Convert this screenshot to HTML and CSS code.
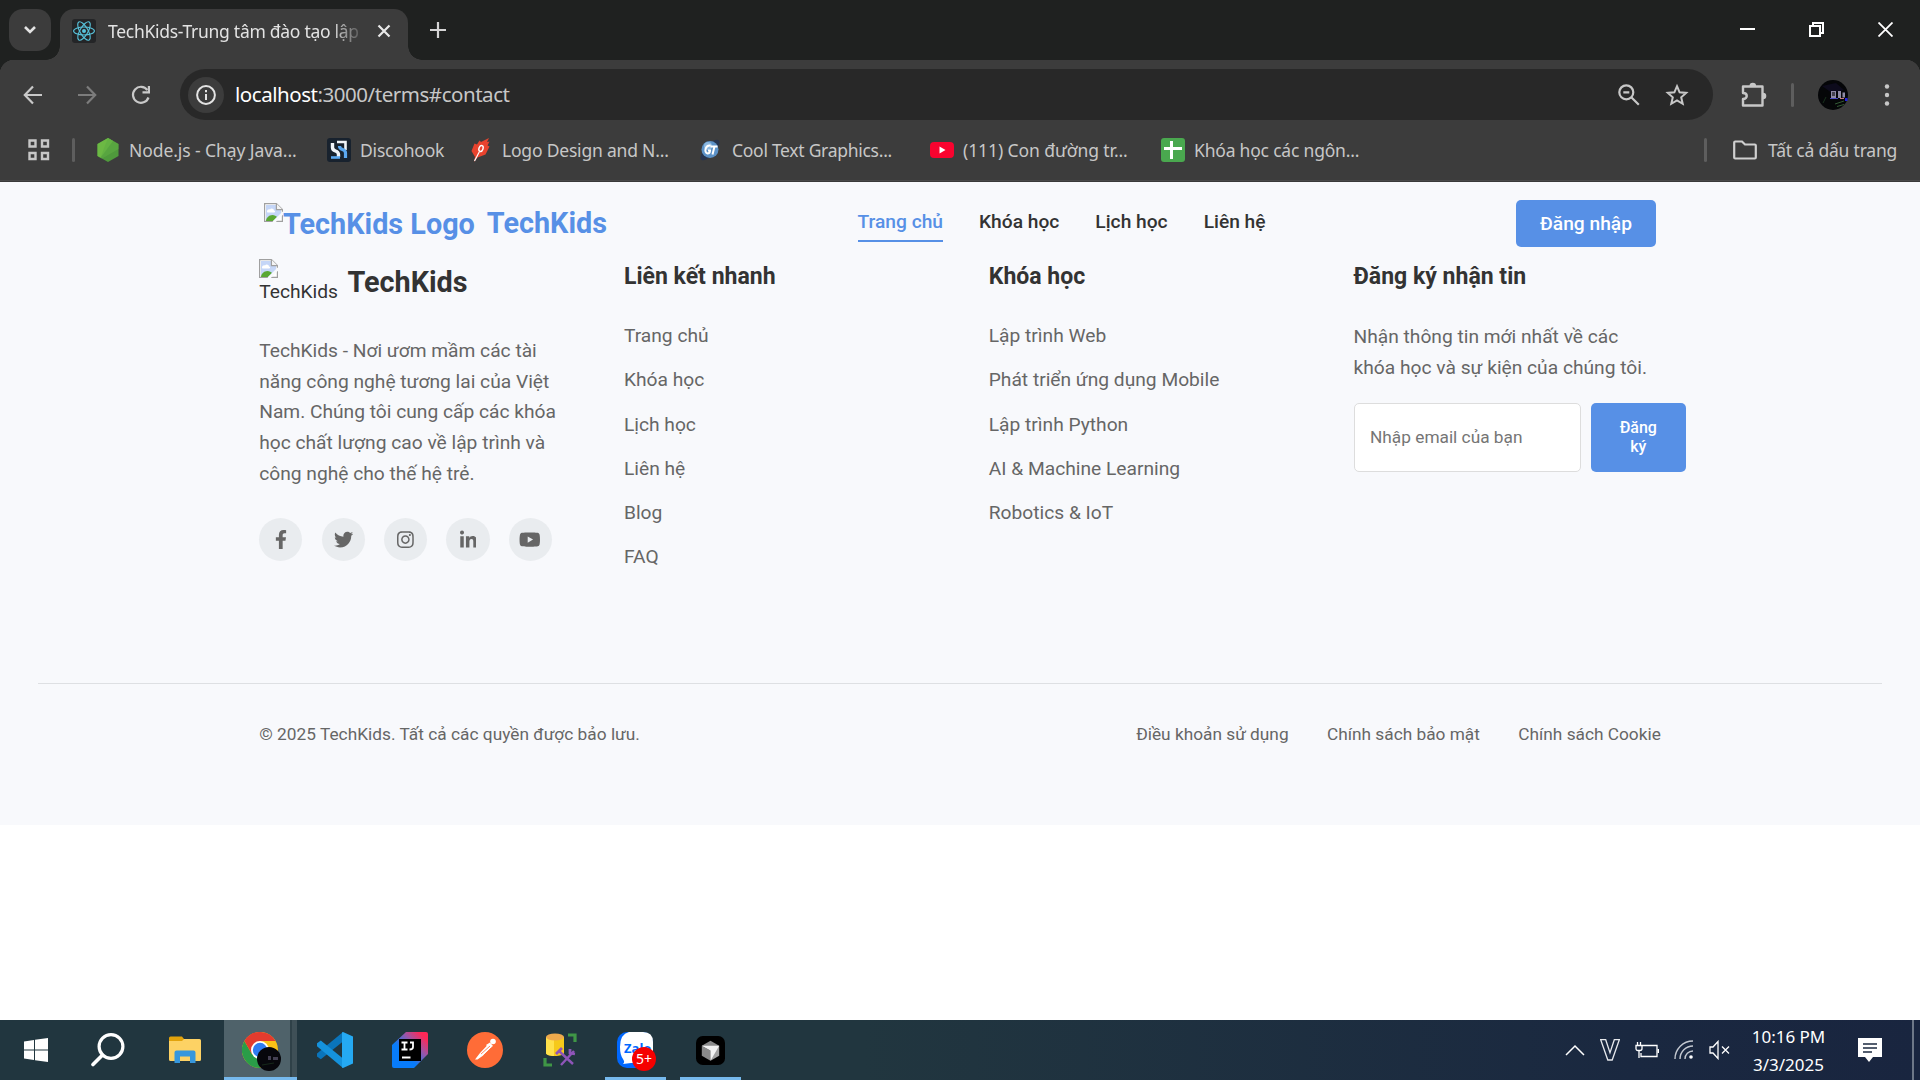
FILE: index.html
```html
<!DOCTYPE html>
<html lang="vi">
<head>
<meta charset="utf-8">
<title>TechKids-Trung tâm đào tạo lập trình</title>
<link rel="stylesheet" href="styles.css">
</head>
<body>
<div class="tabstrip">
  <div class="tab-search"><svg width="14" height="10" viewBox="0 0 14 10"><path d="M2 2l5 5 5-5" fill="none" stroke="#e3e3e3" stroke-width="2.6"/></svg></div>
  <div class="tab">
    <svg class="favicon" width="24" height="24" viewBox="0 0 24 24"><rect width="24" height="24" rx="3" fill="#242527"/><g fill="none" stroke="#58c4dc" stroke-width="1.1"><ellipse cx="12" cy="12" rx="10.4" ry="4"/><ellipse cx="12" cy="12" rx="10.4" ry="4" transform="rotate(60 12 12)"/><ellipse cx="12" cy="12" rx="10.4" ry="4" transform="rotate(120 12 12)"/></g><circle cx="12" cy="12" r="2" fill="#58c4dc"/></svg>
    <div class="tab-title"><span class="t">TechKids-Trung tâm đào tạo lập</span></div>
    <svg class="tab-close" width="14" height="14" viewBox="0 0 14 14"><path d="M1.5 1.5l11 11M12.5 1.5l-11 11" stroke="#e8e8e8" stroke-width="2.2"/></svg>
  </div>
  <svg class="new-tab" width="16" height="16" viewBox="0 0 16 16"><path d="M8 0v16M0 8h16" stroke="#d5d5d5" stroke-width="2.2"/></svg>
  <div class="win-controls">
    <svg width="15" height="15" viewBox="0 0 15 15"><path d="M0 7h15" stroke="#fff" stroke-width="2"/></svg>
    <svg width="15" height="15" viewBox="0 0 15 15"><path d="M1 4h10v10H1zM4 4V1h10v10h-3" fill="none" stroke="#fff" stroke-width="2"/></svg>
    <svg width="15" height="15" viewBox="0 0 15 15"><path d="M.5.5l14 14M14.5.5l-14 14" stroke="#fff" stroke-width="1.8"/></svg>
  </div>
</div>
<div class="toolbar-wrap">
<div class="toolbar">
  <svg class="nav-btn" width="20" height="20" viewBox="0 0 20 20"><path d="M19 10H2M10 1.5L1.8 10l8.2 8.500" fill="none" stroke="#c9c9c9" stroke-width="2.2"/></svg>
  <svg class="nav-btn" width="20" height="20" viewBox="0 0 20 20"><path d="M1 10h17M10 1.5l8.200 8.500L10 18.500" fill="none" stroke="#7c7c7c" stroke-width="2.2"/></svg>
  <svg class="nav-btn" width="20" height="20" viewBox="0 0 20 20"><path d="M17.5 12.500A8 8 0 1 1 16.400 5" fill="none" stroke="#c9c9c9" stroke-width="2.2"/><path d="M19 1v7.500h-7.500V6.300h5.300V1z" fill="#c9c9c9"/></svg>
  <div class="omnibox">
    <div class="site-info"><svg width="20" height="20" viewBox="0 0 20 20"><circle cx="10" cy="10" r="8.9" fill="none" stroke="#e3e3e3" stroke-width="2"/><path d="M10 9v6M10 5v2.200" stroke="#e3e3e3" stroke-width="2"/></svg></div>
    <div class="url"><span class="t"><span class="host">localhost</span>:3000/terms#contact</span></div>
    <svg class="zoom-icon" width="22" height="22" viewBox="0 0 22 22"><circle cx="8.3" cy="8.3" r="7" fill="none" stroke="#c7c7c7" stroke-width="2.2"/><path d="M13.3 13.300l7.500 7.500M5.300 8.300h6" stroke="#c7c7c7" stroke-width="2.2"/></svg>
    <svg class="star-icon" width="24" height="24" viewBox="0 0 24 24"><path d="M12 3.200l2.600 6.100 6.600.6-5 4.400 1.500 6.500L12 17.400l-5.700 3.400 1.500-6.500-5-4.400 6.600-.6z" fill="none" stroke="#c7c7c7" stroke-width="2"/></svg>
  </div>
  <svg class="ext-icon" width="26" height="26" viewBox="0 0 26 26"><path d="M2 4.500h19.500v19H2V17c5 0 5-6 0-6z" fill="none" stroke="#c7c7c7" stroke-width="2.4" stroke-linejoin="round"/><path d="M8.500 4a3.300 3.300 0 0 1 6.600 0zM22 10.700a3.300 3.300 0 0 1 0 6.600z" fill="#c7c7c7"/></svg>
  <div class="vsep"></div>
  <svg class="avatar" width="30" height="30" viewBox="0 0 30 30"><circle cx="15" cy="15" r="15" fill="#050608"/><path d="M4 6l14-3 8 7-12 3z" fill="#0d0b1c"/><path d="M13 11h5v7h-5zM20 11h3v7h-3zM24.500 12.500h2.500v5h-2.500z" fill="#8f8ba5"/><path d="M14 12h3v4h-3z" fill="#44424f"/><path d="M12 18.500h8" stroke="#4a4ac0"/><path d="M22 18.500h4" stroke="#c77b7b"/><path d="M27 18h2.500v3H27z" fill="#2525e0"/><path d="M17 24l9-3M19 26.500l7-2" stroke="#335a35"/><path d="M8 17l-3 6" stroke="#18301c"/></svg>
  <svg class="menu-dots" width="6" height="24" viewBox="0 0 6 24"><g fill="#c7c7c7"><circle cx="3" cy="3.500" r="2.2"/><circle cx="3" cy="12" r="2.2"/><circle cx="3" cy="20.500" r="2.2"/></g></svg>
</div>
<div class="bookmarks">
  <svg class="apps" width="22" height="22" viewBox="0 0 22 22"><path d="M1.500 1.500h6v6h-6zM14 1.500h6v6h-6zM1.500 14h6v6h-6zM14 14h6v6h-6z" fill="none" stroke="#c7c7c7" stroke-width="2.4"/></svg>
  <div class="vsep"></div>
  <div class="bm bm-node"><svg width="24" height="24" viewBox="0 0 24 24"><path d="M12 0l10.500 6v12L12 24 1.500 18V6z" fill="#4f9a3c"/><path d="M12 0L1.500 6v12l3 1.700L17 2.900z" fill="#6cb944"/><path d="M12 0l10.500 6v5L6 20.600l-1.500-.9z" fill="#5fae42" opacity=".6"/></svg><span class="t">Node.js - Chạy Java...</span></div>
  <div class="bm bm-disco"><svg width="24" height="24" viewBox="0 0 24 24"><rect width="24" height="24" rx="3" fill="#18222e"/><path d="M5.500 5v4.500q0 2.500 3 3.500t3 3.500V19" fill="none" stroke="#f1f4f8" stroke-width="3.4"/><path d="M10 4h8.500v8" fill="none" stroke="#f1f4f8" stroke-width="2.600"/><path d="M18.500 20v-5q0-2.500-3-3.500t-3-3.500" fill="none" stroke="#5ba8f0" stroke-width="3.200"/><path d="M4 19.500h9" stroke="#5ba8f0" stroke-width="2.600"/></svg><span class="t">Discohook</span></div>
  <div class="bm bm-logo"><svg width="24" height="24" viewBox="0 0 24 24"><path d="M20 0l-2 4 2.500-.5-2 4 2 1-4 8-8 3-3.500 4.500L6 19l-3.500-6 3-7.500 2.500 1 2.500-4 1.500 1.500z" fill="#e8432e"/><path d="M5.500 23l5-9.500" stroke="#fff" stroke-width="1.2"/><ellipse cx="12" cy="10.500" rx="2" ry="3" fill="none" stroke="#fff" stroke-width="1.4" transform="rotate(20 12 10.500)"/></svg><span class="t">Logo Design and N...</span></div>
  <div class="bm bm-cool"><svg width="24" height="24" viewBox="0 0 24 24"><ellipse cx="11" cy="12" rx="13" ry="5" fill="#26344f" transform="rotate(-48 11 12)"/><circle cx="11" cy="11.500" r="8.500" fill="#5c92c8"/><circle cx="9" cy="8" r="4" fill="#8cb8e0"/><path d="M11.500 7.500c-5-1-7 7-3 8 1.500 0 2.500-1.500 2.500-3H9M11.500 8.500h7M15.500 8.500l-2 8" fill="none" stroke="#fff" stroke-width="2"/></svg><span class="t">Cool Text Graphics...</span></div>
  <div class="bm bm-yt"><svg width="24" height="24" viewBox="0 0 24 24"><rect y="4" width="24" height="16" rx="4" fill="#f9032f"/><path d="M9.500 8.500v7l6-3.500z" fill="#fff"/></svg><span class="t">(111) Con đường tr...</span></div>
  <div class="bm bm-sheet"><svg width="24" height="24" viewBox="0 0 24 24"><rect width="24" height="24" rx="3" fill="#4aa84f"/><path d="M10.500 3v18M3 10.500h18" stroke="#fff" stroke-width="3"/></svg><span class="t">Khóa học các ngôn...</span></div>
  <div class="vsep all-sep"></div>
  <div class="bm bm-all"><svg width="24" height="20" viewBox="0 0 24 20"><path d="M1.200 2.500Q1.200 1.500 2.200 1.500H9l3 3h9.800q1 0 1 1v12q0 1-1 1H2.200q-1 0-1-1z" fill="none" stroke="#d0d0d0" stroke-width="2.2"/></svg><span class="t">Tất cả dấu trang</span></div>
</div>
</div>

<main class="page">
  <header class="site-header">
    <a class="brand"><svg class="broken" width="19" height="20" viewBox="0 0 19 20"><use href="#broken-image"/></svg><span class="t brand-alt">TechKids Logo</span><span class="t brand-name">TechKids</span></a>
    <nav class="site-nav"><a class="t active">Trang chủ</a><a class="t">Khóa học</a><a class="t">Lịch học</a><a class="t">Liên hệ</a></nav>
    <a class="login"><span class="t">Đăng nhập</span></a>
  </header>
  <footer class="footer">
    <div class="footer-grid">
      <section>
        <div class="footer-brand">
          <div class="footer-logo"><svg class="broken" width="19" height="20" viewBox="0 0 19 20"><g id="broken-image"><path d="M.6.600h11.800l6 6v11.800H.6z" fill="#fff" stroke="#a0a0a0" stroke-width="1.2"/><path d="M2 2h10v5h5v5l-6 6H2z" fill="#c5d6f7"/><path d="M3 8.500c0-2 2-2.500 3-2 1-2 4-1 4 1 1.500 0 1.500 2 0 2H4c-.7 0-1-.4-1-1z" fill="#fff"/><path d="M2 18c0-3 3-6 6.500-6 2 0 3.500 1 4.500 2l-4 4z" fill="#5aa833"/><path d="M12.400.600v6h6" fill="#f4f4f4" stroke="#a0a0a0" stroke-width="1.2"/><path d="M19.500 9.500L9.500 19.500" stroke="#f8f9fc" stroke-width="2.6"/></g></svg><span class="t">TechKids</span></div>
          <h2 class="t">TechKids</h2>
        </div>
        <p class="about">TechKids - Nơi ươm mầm các tài<br>năng công nghệ tương lai của Việt<br>Nam. Chúng tôi cung cấp các khóa<br>học chất lượng cao về lập trình và<br>công nghệ cho thế hệ trẻ.</p>
        <div class="social">
          <a><svg viewBox="0 0 320 512"><path d="M279.140 288l14.220-92.660h-88.910v-60.130c0-25.350 12.420-50.060 52.240-50.060h40.420V6.260S260.430 0 225.360 0c-73.220 0-121.080 44.380-121.080 124.720v70.620H22.890V288h81.390v224h100.170V288z"/></svg></a>
          <a><svg viewBox="0 0 512 512"><path d="M459.370 151.716c.325 4.548.325 9.097.325 13.645 0 138.720-105.583 298.558-298.558 298.558-59.452 0-114.680-17.219-161.137-47.106 8.447.974 16.568 1.299 25.340 1.299 49.055 0 94.213-16.568 130.274-44.832-46.132-.975-84.792-31.188-98.112-72.772 6.498.974 12.995 1.624 19.818 1.624 9.421 0 18.843-1.300 27.614-3.573-48.081-9.747-84.143-51.980-84.143-102.985v-1.299c13.969 7.797 30.214 12.670 47.431 13.319-28.264-18.843-46.781-51.005-46.781-87.391 0-19.492 5.197-37.360 14.294-52.954 51.655 63.675 129.300 105.258 216.365 109.807-1.624-7.797-2.599-15.918-2.599-24.040 0-57.828 46.782-104.934 104.934-104.934 30.213 0 57.502 12.670 76.670 33.137 23.715-4.548 46.456-13.320 66.599-25.340-7.798 24.366-24.366 44.833-46.132 57.827 21.117-2.273 41.584-8.122 60.426-16.243-14.292 20.791-32.161 39.308-52.628 54.253z"/></svg></a>
          <a><svg viewBox="0 0 448 512"><path d="M224.100 141c-63.600 0-114.900 51.300-114.900 114.900s51.300 114.900 114.900 114.900S339 319.500 339 255.900 287.700 141 224.100 141zm0 189.600c-41.100 0-74.700-33.500-74.700-74.700s33.500-74.700 74.700-74.700 74.700 33.500 74.700 74.700-33.600 74.700-74.700 74.700zm146.400-194.300c0 14.900-12 26.800-26.800 26.800-14.900 0-26.800-12-26.800-26.800s12-26.800 26.800-26.800 26.800 12 26.800 26.800zm76.100 27.200c-1.700-35.900-9.900-67.700-36.200-93.900-26.200-26.200-58-34.400-93.900-36.200-37-2.100-147.900-2.100-184.900 0-35.800 1.700-67.600 9.900-93.900 36.100s-34.400 58-36.200 93.900c-2.100 37-2.100 147.900 0 184.900 1.700 35.900 9.900 67.700 36.200 93.900s58 34.400 93.900 36.200c37 2.100 147.900 2.100 184.900 0 35.900-1.700 67.700-9.900 93.900-36.200 26.200-26.200 34.400-58 36.200-93.900 2.100-37 2.100-147.800 0-184.800zM398.800 388c-7.800 19.600-22.900 34.700-42.600 42.600-29.500 11.700-99.500 9-132.100 9s-102.700 2.600-132.100-9c-19.600-7.800-34.700-22.900-42.600-42.600-11.700-29.500-9-99.500-9-132.100s-2.600-102.700 9-132.100c7.800-19.600 22.900-34.700 42.600-42.600 29.500-11.700 99.500-9 132.100-9s102.700-2.600 132.100 9c19.600 7.800 34.700 22.900 42.600 42.600 11.700 29.500 9 99.500 9 132.100s2.700 102.700-9 132.100z"/></svg></a>
          <a><svg viewBox="0 -16 448 512"><path d="M100.280 448H7.400V148.900h92.880zM53.790 108.100C24.090 108.100 0 83.500 0 53.800a53.790 53.790 0 0 1 107.580 0c0 29.700-24.100 54.300-53.790 54.300zM447.900 448h-92.680V302.400c0-34.700-.7-79.200-48.290-79.200-48.290 0-55.690 37.700-55.690 76.700V448h-92.780V148.900h89.080v40.800h1.300c12.400-23.500 42.690-48.300 87.880-48.300 94 0 111.280 61.900 111.280 142.300V448z"/></svg></a>
          <a><svg viewBox="0 0 576 512"><path d="M549.655 124.083c-6.281-23.650-24.787-42.276-48.284-48.597C458.781 64 288 64 288 64S117.220 64 74.629 75.486c-23.497 6.322-42.003 24.947-48.284 48.597-11.412 42.867-11.412 132.305-11.412 132.305s0 89.438 11.412 132.305c6.281 23.650 24.787 41.500 48.284 47.821C117.220 448 288 448 288 448s170.780 0 213.371-11.486c23.497-6.321 42.003-24.171 48.284-47.821 11.412-42.867 11.412-132.305 11.412-132.305s0-89.438-11.412-132.305zm-317.510 213.508V175.185l142.739 81.205-142.739 81.201z"/></svg></a>
        </div>
      </section>
      <section>
        <h3>Liên kết nhanh</h3>
        <ul><li>Trang chủ</li><li>Khóa học</li><li>Lịch học</li><li>Liên hệ</li><li>Blog</li><li>FAQ</li></ul>
      </section>
      <section>
        <h3>Khóa học</h3>
        <ul><li>Lập trình Web</li><li>Phát triển ứng dụng Mobile</li><li>Lập trình Python</li><li>AI &amp; Machine Learning</li><li>Robotics &amp; IoT</li></ul>
      </section>
      <section>
        <h3>Đăng ký nhận tin</h3>
        <p class="news">Nhận thông tin mới nhất về các<br>khóa học và sự kiện của chúng tôi.</p>
        <div class="subscribe"><div class="field">Nhập email của bạn</div><div class="submit"><span>Đăng</span><span>ký</span></div></div>
      </section>
    </div>
    <div class="footer-bottom">
      <div class="footer-bottom-inner"><span class="t copyright">© 2025 TechKids. Tất cả các quyền được bảo lưu.</span><div class="legal"><a class="t">Điều khoản sử dụng</a><a class="t">Chính sách bảo mật</a><a class="t">Chính sách Cookie</a></div></div>
    </div>
  </footer>
</main>

<div class="taskbar">
  <div class="tb start"><svg width="24" height="24" viewBox="0 0 24 24"><path d="M0 3.400L10 2v9.500H0zM11 1.800L24 0v11.500H11zM0 12.500h10V22L0 20.600zM11 12.500h13V24l-13-1.800z" fill="#fff"/></svg></div>
  <div class="tb search"><svg width="34" height="34" viewBox="0 0 34 34"><circle cx="20" cy="13.500" r="11.900" fill="none" stroke="#fff" stroke-width="3.2"/><path d="M11.500 22L2 31.500" stroke="#fff" stroke-width="3.6" stroke-linecap="round"/></svg></div>
  <div class="tb"><svg width="32" height="28" viewBox="0 0 32 28"><path d="M0 2q0-1.500 1.500-1.500H13L15 3v4H0z" fill="#e2a30c"/><path d="M0 5h13l2-2h15.500Q32 3 32 4.500v19q0 1.500-1.500 1.500h-29Q0 25 0 23.500z" fill="#fdd264"/><path d="M5.500 27V16.500q0-2 2-2h17q2 0 2 2V27h-5.500v-6.500H11V27z" fill="#3797dc"/></svg></div>
  <div class="tb chrome"><svg width="40" height="40" viewBox="0 0 40 40"><circle cx="18" cy="18" r="18" fill="#fbc116"/><path d="M2.400 9A18 18 0 0 0 18 36l7.800-13.500L18 18 10.200 22.500z" fill="#2a9d48"/><path d="M18 9h15.600A18 18 0 0 0 2.400 9l7.800 13.500z" fill="#e33b2e"/><circle cx="18" cy="18" r="9" fill="#fff"/><circle cx="18" cy="18" r="7.200" fill="#2f7cf0"/><circle cx="27" cy="27" r="12" fill="#07070c"/><path d="M26 24h3v4h-3zM31 25h5v3h-5z" fill="#444052"/><path d="M20 33l12-2" stroke="#16281a"/></svg></div>
  <div class="tb"><svg width="36" height="36" viewBox="0 0 36 36"><path d="M26 0v9.500L3.800 27.200 0 24.500v-3z" fill="#0a74ba"/><path d="M26 36v-9.500L3.800 8.500 0 11.200v3z" fill="#1592dc"/><path d="M26 0l10 4.500v27L26 36c-1 0-1-1-1-1V1s0-1 1-1z" fill="#25a9f2"/></svg></div>
  <div class="tb"><svg width="36" height="36" viewBox="0 0 36 36"><defs><linearGradient id="ij" x1="0" y1="1" x2="1" y2="0"><stop offset=".38" stop-color="#087cfa"/><stop offset=".65" stop-color="#9a55a8"/><stop offset=".88" stop-color="#fe2857"/></linearGradient></defs><path d="M14 0h20q2 0 2 2v20L22 36H2q-2 0-2-2V13z" fill="url(#ij)"/><path d="M7 7h22v22H7z"/><path d="M9.500 10.500h6M12.500 10.500v7M9.500 17.500h6M18 10.500h3V15q0 2.500-3.500 2.500M10 25.500h8.500" fill="none" stroke="#fff" stroke-width="1.8"/></svg></div>
  <div class="tb"><svg width="36" height="36" viewBox="0 0 36 36"><circle cx="18" cy="18" r="18" fill="#ff6c37"/><path d="M8 27.500l5-6.500 8-8.500 3.500 3-9 8.500-5 3.500zM19 13l4-2.500 3 3.500-4 2.500z" fill="#fff"/><circle cx="26" cy="9.500" r="2.800" fill="#fff"/><path d="M14 22l9-8M17 23l7-7" stroke="#ff6c37" stroke-width=".8"/></svg></div>
  <div class="tb"><svg width="34" height="34" viewBox="0 0 34 34"><path d="M3 4v16c0 4 18 4 18 0V4z" fill="#f6c91a"/><path d="M3 4v16c0 2 4 3 8 3V4z" fill="#ffe14b"/><ellipse cx="12" cy="4" rx="9" ry="3.500" fill="#eea94c"/><path d="M25 2h7v7M2 25v7h7" fill="none" stroke="#3f9646" stroke-width="3.2"/><path d="M16 18l14 13M31 18L18 32" stroke="#8e55b8" stroke-width="2.4"/><path d="M13 21l6-6M27 16v4l5 1" stroke="#8e55b8" stroke-width="2.8" fill="none"/></svg></div>
  <div class="tb running"><div class="zalo"><svg width="36" height="36" viewBox="0 0 36 36"><rect width="36" height="36" rx="10" fill="#0068ff"/><path d="M12 0h14q10 0 10 10v12q0 9-10 9H14l-8 1c2-2 1-3 0-5Q3 23 3 15 3 2 12 0z" fill="#fff"/></svg><b>Zalo</b><em>5+</em></div><i></i></div>
  <div class="tb running"><svg width="29" height="29" viewBox="0 0 30 30"><rect width="30" height="30" rx="7" fill="#000"/><path d="M15 5l9 5-9 5-9-5z" fill="#8b8b8b"/><path d="M6 10l9 5v10.500l-9-5z" fill="#8a8a8a"/><path d="M24 10v10.500l-9 5V15z" fill="#a2a2a2"/><path d="M6 10h18l-9 15.500V15z" fill="#f2f2f2"/></svg><i></i></div>
  <div class="tray">
    <svg width="20" height="12" viewBox="0 0 20 12"><path d="M1 11l9-9 9 9" fill="none" stroke="#fff" stroke-width="1.5"/></svg>
    <svg width="20" height="22" viewBox="0 0 20 22"><path d="M.7.700h5l4.300 13L14.300.700h5L12.200 21H7.800z" fill="none" stroke="#e6e8ec" stroke-width="1.3"/></svg>
    <svg width="24" height="18" viewBox="0 0 24 18"><path d="M7 4.500h15v11H6V12M23.500 8v4M1 4.500h6v3q0 2-2 2H3q-2 0-2-2zM2.500 1v3.500M5.500 1v3.500M4 9.500V17" fill="none" stroke="#fff" stroke-width="1.3"/></svg>
    <svg width="20" height="20" viewBox="0 0 20 20"><g fill="none" stroke="#c3c8d0" stroke-width="1.4"><path d="M1 19A18 18 0 0 1 19 1"/><path d="M6 19A13 13 0 0 1 19 6"/><path d="M11 19a8 8 0 0 1 8-8"/></g><circle cx="17" cy="17" r="1.8" fill="#fff"/></svg>
    <svg width="22" height="20" viewBox="0 0 22 20"><path d="M1 7h3l5-5.500v17L4 13H1zM13 6.500l7 7M20 6.500l-7 7" fill="none" stroke="#fff" stroke-width="1.3"/></svg>
  </div>
  <div class="clock"><span class="t">10:16 PM</span><span class="t">3/3/2025</span></div>
  <svg class="notif" width="24" height="24" viewBox="0 0 24 24"><path d="M0 0h24v19H15l-4 5-4-5H0z" fill="#fff"/><path d="M5 6h14M5 10h14M5 14h9" stroke="#1b2a40" stroke-width="1.3"/></svg>
  <div class="show-desktop"></div>
</div>
</body>
</html>
```
FILE: styles.css
```css
* { box-sizing: border-box; margin: 0; padding: 0; }
body { width: 1920px; height: 1080px; overflow: hidden; background: #fff; font-family: "Noto Sans", sans-serif; display: flex; flex-direction: column; }
svg { display: block; flex: none; }
.t { white-space: nowrap; }

/* Browser window */
.tabstrip { height: 60px; background: #1f2120; display: flex; align-items: flex-start; padding: 9px 0 0 9px; flex: none; }
.tab-search { width: 42px; height: 42px; border-radius: 14px; background: #3c3c3c; display: flex; align-items: center; justify-content: center; }
.tab { position: relative; width: 348px; height: 51px; margin-left: 9px; padding: 0 17px 8px 12px; background: #3c3c3c; border-radius: 14px 14px 0 0; display: flex; align-items: center; }
.tab::before, .tab::after { content: ""; position: absolute; bottom: 0; width: 14px; height: 14px; }
.tab::before { left: -14px; background: radial-gradient(circle at 0 0, transparent 13.5px, #3c3c3c 14px); }
.tab::after { right: -14px; background: radial-gradient(circle at 100% 0, transparent 13.5px, #3c3c3c 14px); }
.tab-title { width: 252px; margin-left: 12px; overflow: hidden; font-size: 17.5px; letter-spacing: -.28px; line-height: 26px; color: #e3e3e3; -webkit-mask-image: linear-gradient(90deg, #000 222px, transparent 258px); mask-image: linear-gradient(90deg, #000 222px, transparent 258px); }
.tab-close { margin-left: auto; }
.new-tab { margin: 13px 0 0 22px; }
.win-controls { display: flex; gap: 54px; margin: 13px 27px 0 auto; }

.toolbar-wrap { height: 122px; flex: none; background: linear-gradient(#3c3c3c 0 0) 0 14px / 100% 100% no-repeat, radial-gradient(circle at 14px 14px, #3c3c3c 14px, #1f2120 14.5px) 0 0 / 14px 14px no-repeat, radial-gradient(circle at 0 14px, #3c3c3c 14px, #1f2120 14.5px) 100% 0 / 14px 14px no-repeat, #3c3c3c; border-bottom: 1px solid #3a3a3a; box-shadow: inset 0 -1px #494949; }
.toolbar { height: 69px; display: flex; align-items: center; padding-left: 23px; }
.nav-btn { margin-right: 34px; }
.omnibox { width: 1533px; height: 51px; margin-left: -5px; border-radius: 26px; background: #282828; display: flex; align-items: center; padding: 0 24px 0 8px; }
.site-info { width: 36px; height: 36px; border-radius: 50%; background: #3c3c3c; display: flex; align-items: center; justify-content: center; }
.url { margin-left: 11px; padding-bottom: 2px; font-size: 20.5px; letter-spacing: -.46px; line-height: 30px; color: #c7c7c7; }
.host { color: #fff; }
.zoom-icon { margin-left: auto; }
.star-icon { margin-left: 25px; }
.ext-icon { margin-left: 28px; }
.vsep { width: 3px; height: 24px; border-radius: 2px; background: #5e5e5e; flex: none; }
.toolbar .vsep { margin-left: 24px; }
.avatar { margin-left: 24px; }
.menu-dots { margin-left: 36px; }
.bookmarks { height: 51px; margin-top: -4px; display: flex; align-items: center; padding: 0 21px 2px 28px; }
.apps { margin-right: 22px; }
.bm { display: flex; align-items: center; gap: 9px; color: #c7c7c7; font-size: 17.5px; letter-spacing: -.2px; line-height: 26px; white-space: nowrap; }
.bm-node { width: 231px; margin-left: 21px; letter-spacing: -.08px; }
.bm-disco { width: 142px; }
.bm-logo { width: 230px; }
.bm-cool { width: 231px; letter-spacing: -.28px; }
.bm-yt { width: 231px; letter-spacing: -.08px; }
.all-sep { margin-left: auto; }
.bm-all { width: 166px; margin-left: 26px; gap: 11px; }

/* Site */
.page { flex: 1; background: #fff; font-family: Roboto, sans-serif; font-size: 19.2px; line-height: 30.72px; color: #333; }
.site-header { height: 77px; padding: 6px 264px 0; background: #f8f9fc; display: flex; align-items: center; }
.brand { display: flex; align-items: center; width: 593.5px; color: #5790e6; font-size: 28.8px; font-weight: 700; line-height: 46px; }
.brand .broken { margin-bottom: 21px; }
.brand-alt { padding-top: 2px; margin-top: -2px; }
.brand-name { margin-left: 12px; margin-top: -2px; }
.site-nav { display: flex; gap: 36px; font-weight: 500; line-height: 36px; padding-bottom: 1px; }
.site-nav a { border-bottom: 2px solid transparent; }
.site-nav .active { color: #5790e6; border-color: #5790e6; }
.login { width: 140px; height: 47px; margin-left: auto; border-radius: 5px; background: #5790e6; color: #fff; font-weight: 500; text-align: center; line-height: 47px; }
.footer { height: 566px; background: #f8f9fc; padding: 0 38.4px; color: #666; }
.footer-grid { height: 424px; padding-left: 220.8px; display: grid; grid-template-columns: repeat(4, 307.2px); column-gap: 57.6px; }
.footer-brand { height: 46px; display: flex; align-items: center; gap: 9.5px; color: #333; }
.footer-logo { height: 46px; line-height: 25px; }
.footer-brand h2 { font-size: 28.8px; font-weight: 700; }
.about { margin-top: 31px; white-space: nowrap; }
.social { display: flex; gap: 19.2px; margin-top: 28.4px; }
.social a { width: 43.2px; height: 43.2px; border-radius: 50%; background: #e9ecef; display: flex; align-items: center; justify-content: center; }
.social svg { height: 19.2px; fill: #666; }
h3 { padding-top: 1px; font-size: 23.04px; line-height: 34px; font-weight: 700; color: #333; }
ul { list-style: none; margin-top: 27.3px; }
li { margin-bottom: 13.48px; }
.news { margin-top: 28px; white-space: nowrap; }
.subscribe { display: flex; gap: 10px; width: 332.5px; height: 69px; margin-top: 19.6px; }
.field { width: 227px; border: 1px solid #ddd; border-radius: 5px; background: #fff; padding-left: 15.5px; font-size: 17.28px; line-height: 67px; color: #757575; }
.submit { flex: 1; border-radius: 5px; background: #5790e6; color: #fff; font-size: 16px; font-weight: 500; line-height: 19px; padding-bottom: 1px; display: flex; flex-direction: column; align-items: center; justify-content: center; }
.footer-bottom { border-top: 1px solid #dee0e3; }
.footer-bottom-inner { display: flex; justify-content: space-between; padding: 35px 220.8px 0; font-size: 17.28px; }
.copyright { letter-spacing: .02px; }
.legal { display: flex; gap: 38.4px; }

/* Taskbar */
.taskbar { height: 60px; flex: none; background: linear-gradient(90deg, #21363f 0, #21363f 45%, #1a2840 85%, #19253f); display: flex; align-items: center; color: #fff; }
.tb { position: relative; width: 75px; height: 60px; display: flex; align-items: center; justify-content: center; }
.start { width: 72px; }
.search { padding-right: 4px; }
.chrome { margin-left: 2px; width: 73px; background: linear-gradient(90deg, #4f626a 66px, #2f4148 66px, #2f4148 68px, #3f5057 68px); border-bottom: 3px solid #76b9ed; align-items: flex-start; justify-content: flex-start; padding: 12px 0 0 18px; }
.running i { position: absolute; left: 8px; right: 6px; bottom: 0; height: 3px; background: #76b9ed; }
.running { padding-left: 1px; }
.zalo { position: relative; }
.zalo b { position: absolute; left: 7px; top: 6px; font: 700 13px/20px "Open Sans", sans-serif; color: #0068ff; }
.zalo em { position: absolute; left: 15px; top: 15px; width: 24px; height: 24px; border-radius: 50%; background: #f50000; font: normal 14px/24px "Noto Sans", sans-serif; text-align: center; }
.tray { display: flex; align-items: center; gap: 15px; margin-left: auto; }
.clock { width: 108px; margin-left: 4px; padding-right: 1px; display: flex; flex-direction: column; align-items: center; font-size: 17px; line-height: 28px; padding-top: 1px; }
.notif { margin-left: 15px; }
.show-desktop { width: 8px; height: 60px; margin-left: 30px; border-left: 2px solid #6d7787; }
```
